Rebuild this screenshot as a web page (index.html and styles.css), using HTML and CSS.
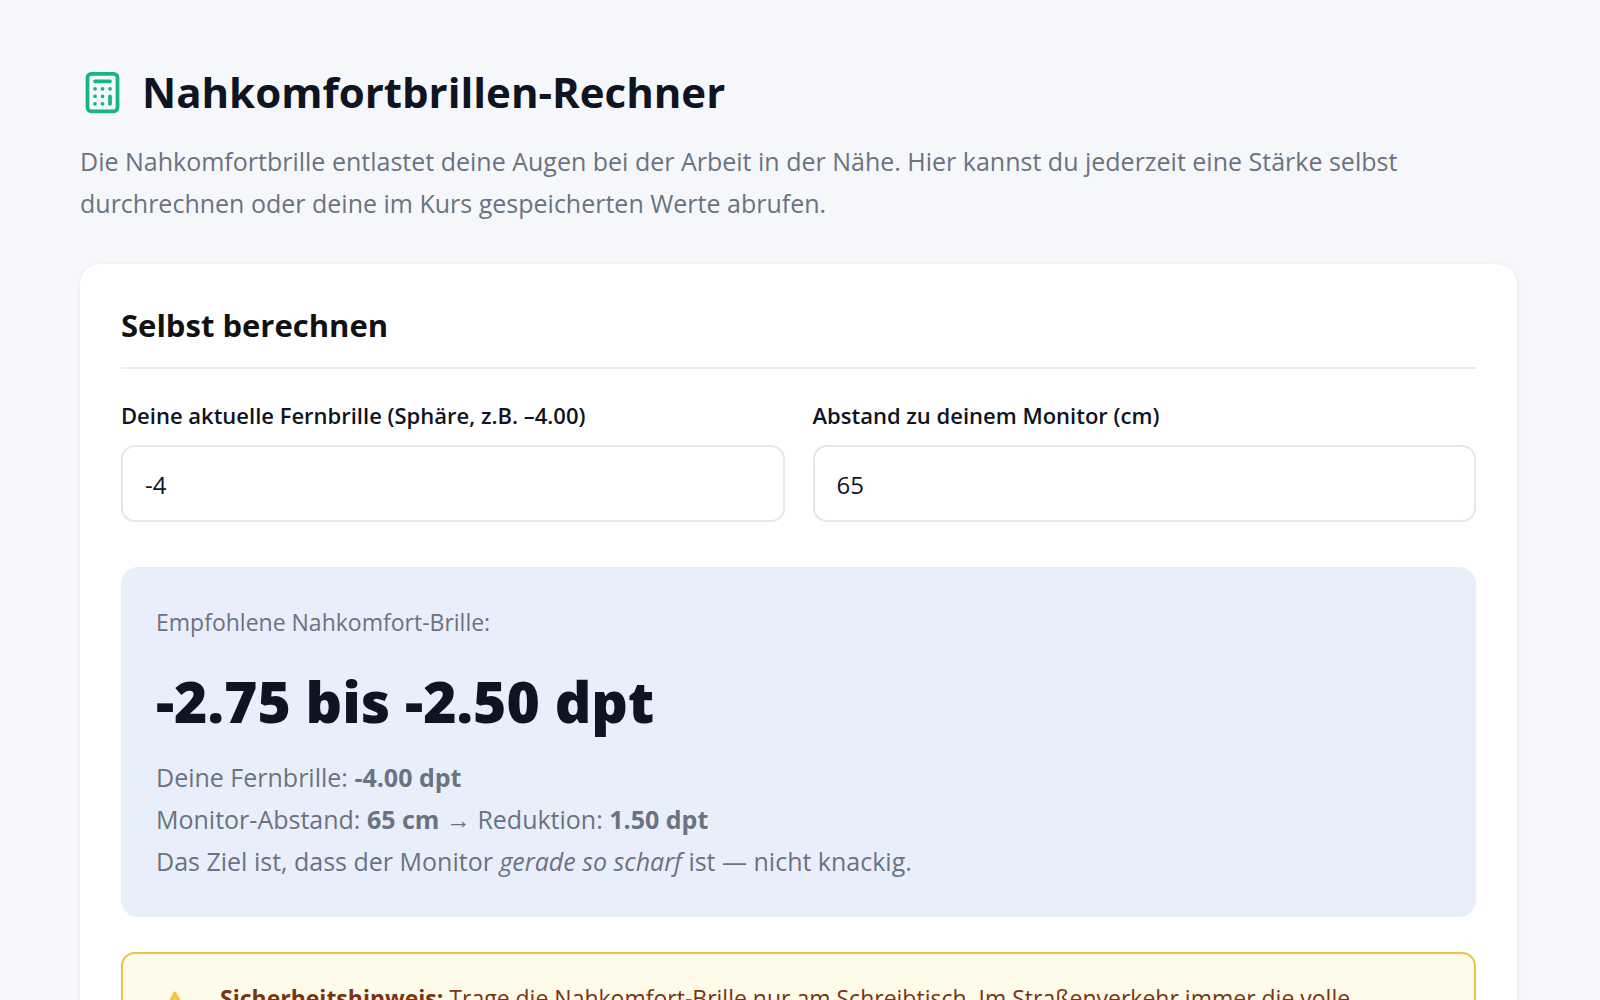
FILE: index.html
```html
<!doctype html>
<html lang="de">
<head>
  <meta charset="UTF-8">
  <meta name="viewport" content="width=device-width, initial-scale=1.0">
  <title>Nahkomfortbrillen-Rechner</title>
  <link rel="stylesheet" href="styles.css">
</head>
<body>

<main class="page">
  <header class="page-header">
    <h1>
      <svg class="title-icon" viewBox="0 0 24 24" fill="none" stroke="currentColor" stroke-width="2" stroke-linecap="round" stroke-linejoin="round" aria-hidden="true">
        <rect x="4" y="2" width="16" height="20" rx="2"/>
        <path d="M8 6h8M16 14v4M16 10h.01M12 10h.01M8 10h.01M12 14h.01M8 14h.01M12 18h.01M8 18h.01"/>
      </svg>
      Nahkomfortbrillen-Rechner
    </h1>
    <p class="intro">Die Nahkomfortbrille entlastet deine Augen bei der Arbeit in der Nähe. Hier kannst du jederzeit eine Stärke selbst durchrechnen oder deine im Kurs gespeicherten Werte abrufen.</p>
  </header>

  <section class="card">
    <h2>Selbst berechnen</h2>

    <form class="fields">
      <div class="field">
        <label for="sphere">Deine aktuelle Fernbrille (Sphäre, z.B. –4.00)</label>
        <input type="text" id="sphere" inputmode="decimal" value="-4">
      </div>
      <div class="field">
        <label for="distance">Abstand zu deinem Monitor (cm)</label>
        <input type="text" id="distance" inputmode="numeric" value="65">
      </div>
    </form>

    <div class="result">
      <p class="result-label">Empfohlene Nahkomfort-Brille:</p>
      <p class="result-value">-2.75 bis -2.50 dpt</p>
      <p class="result-details">
        Deine Fernbrille: <strong>-4.00 dpt</strong><br>
        Monitor-Abstand: <strong>65 cm</strong> → Reduktion: <strong>1.50 dpt</strong><br>
        Das Ziel ist, dass der Monitor <em>gerade so scharf</em> ist — nicht knackig.
      </p>
    </div>

    <div class="warning">
      <svg class="warning-icon" viewBox="0 0 32 32" aria-hidden="true">
        <path d="M16 3 30 28H2Z" fill="#ffc83d" stroke="#f7c048" stroke-width="3" stroke-linejoin="round"/>
        <path d="M16 12v8M16 24v.01" stroke="#422b0d" stroke-width="3" stroke-linecap="round"/>
      </svg>
      <p><strong>Sicherheitshinweis:</strong> Trage die Nahkomfort-Brille nur am Schreibtisch. Im Straßenverkehr immer die volle<br>Fernbrille.</p>
    </div>
  </section>
</main>

</body>
</html>
```
FILE: styles.css
```css
* {
  box-sizing: border-box;
}

body {
  margin: 0;
  font-family: "Open Sans", "Noto Sans", sans-serif;
  background-color: #f5f7fb;
  color: #0f1423;
}

h1, h2, p {
  margin: 0;
}

.page {
  padding: 60px 83px 60px 80px;
}

h1 {
  display: flex;
  align-items: center;
  gap: 17px;
  font-size: 42px;
  line-height: 64px;
  font-weight: 700;
}

.title-icon {
  width: 45px;
  height: 45px;
  flex-shrink: 0;
  color: #17b581;
}

.intro {
  margin-top: 16px;
  font-size: 25px;
  line-height: 42px;
  color: #6b7280;
}

.card {
  margin-top: 40px;
  padding: 40px 41px;
  border-radius: 20px;
  background-color: white;
  box-shadow: 0 1px 4px rgba(0, 0, 0, 0.08);
}

h2 {
  padding-bottom: 21px;
  border-bottom: 2px solid #ededee;
  font-size: 31px;
  line-height: 42px;
  font-weight: 700;
  color: #111;
}

.fields {
  display: grid;
  grid-template-columns: 1fr 1fr;
  gap: 28px;
  margin-top: 28px;
}

.field label {
  display: block;
  margin-bottom: 12px;
  font-size: 22px;
  line-height: 36px;
  font-weight: 600;
}

.field input {
  display: block;
  width: 100%;
  height: 77px;
  padding: 2px 22px 0;
  border: 2px solid #e5e7eb;
  border-radius: 14px;
  background-color: white;
  font-family: inherit;
  font-size: 24px;
  color: #0f1423;
}

.result {
  margin-top: 45px;
  padding: 35px;
  border-radius: 17px;
  background-color: #e8effb;
  color: #6b7280;
}

.result-label {
  font-size: 23px;
  line-height: 40px;
}

.result-value {
  margin: 15px 0 11px;
  font-size: 57px;
  line-height: 88px;
  font-weight: 800;
  color: #0f1423;
}

.result-details {
  font-size: 25px;
  line-height: 42px;
}

.warning {
  display: flex;
  gap: 28px;
  margin-top: 35px;
  padding: 24px 35px;
  border: 2px solid #eec14a;
  border-radius: 14px;
  background-color: #fffbea;
  color: #78350f;
  font-size: 23px;
  line-height: 40px;
}

.warning-icon {
  width: 34px;
  height: 34px;
  margin-top: 12px;
  flex-shrink: 0;
}
```
